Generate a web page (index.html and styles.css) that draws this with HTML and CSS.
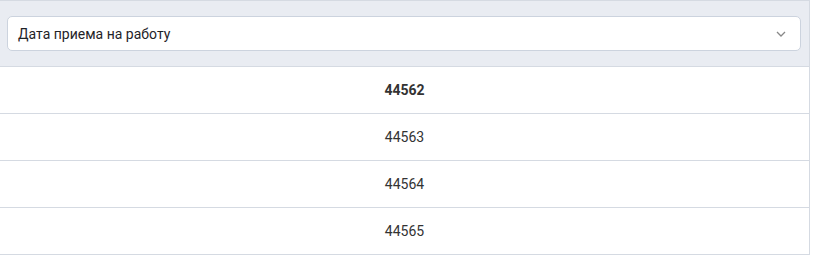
FILE: index.html
```html
<!DOCTYPE html>
<html lang="ru">
<head>
<meta charset="utf-8">
<link rel="stylesheet" href="styles.css">
</head>
<body>
<div class="table">
  <div class="header">
    <div class="select">
      <span class="select-label">Дата приема на работу</span>
      <svg class="chevron" width="10" height="6" viewBox="0 0 10 6"><path d="M1 1l4 4 4-4" fill="none" stroke="#888" stroke-width="1.3"/></svg>
    </div>
  </div>
  <div class="row bold">44562</div>
  <div class="row">44563</div>
  <div class="row">44564</div>
  <div class="row">44565</div>
</div>
</body>
</html>
```
FILE: styles.css
```css
html, body { margin: 0; padding: 0; background: #fff; }
body { font-family: Roboto, "Noto Sans", sans-serif; font-size: 14px; color: #333; }
.table { width: 809px; border-right: 1px solid #d5dae2; }
.header {
  background: #e9ecf2;
  border-top: 1px solid #d5dae2;
  border-bottom: 1px solid #d5dae2;
  padding: 15px 8px 15px 7px;
}
.select {
  height: 33px;
  box-sizing: border-box;
  height: 35px;
  background: #fff;
  border: 1px solid #ccd3de;
  border-radius: 5px;
  display: flex;
  align-items: center;
  justify-content: space-between;
  padding: 0 14px 0 10px;
}
.select-label { color: #1f2328; }
.chevron { display: block; }
.row {
  height: 46px;
  border-bottom: 1px solid #d5dae2;
  display: flex;
  align-items: center;
  justify-content: center;
}
.row.bold { font-weight: 700; }
```
